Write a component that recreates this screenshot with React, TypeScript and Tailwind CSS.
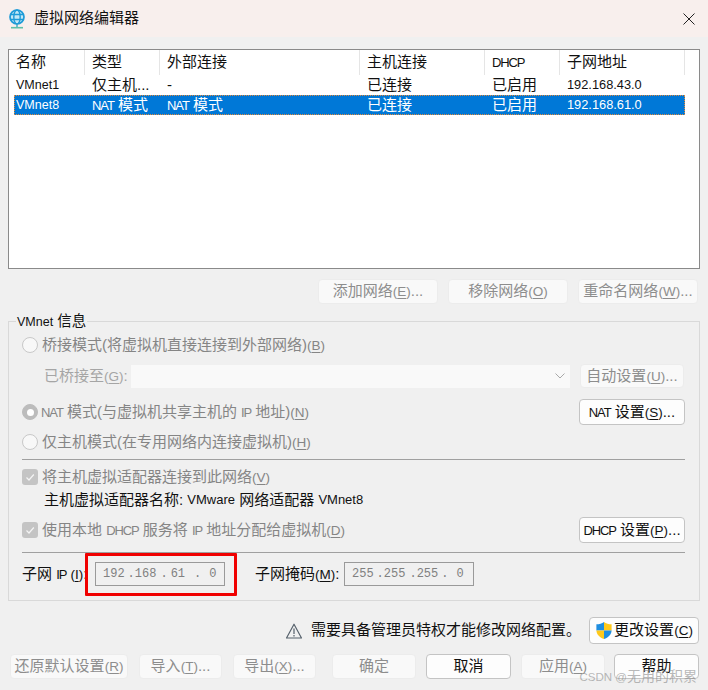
const FONT = "font-['Liberation_Sans','Noto_Sans_CJK_SC',sans-serif]";

function Btn({
  label,
  className,
  enabled,
  children,
}: {
  label?: string;
  className: string;
  enabled?: boolean;
  children?: React.ReactNode;
}) {
  return (
    <div
      className={`flex shrink-0 items-center justify-center whitespace-nowrap rounded-[4px] border text-[15px] ${
        enabled ? "border-[#c4c4c4] bg-[#fdfdfd] text-[#111]" : "border-[#ececec] bg-[#f9f9f9] text-[#8d8d8d]"
      } ${className}`}
    >
      {children ?? label}
    </div>
  );
}

function Radio({ on }: { on?: boolean }) {
  return (
    <div
      className={`flex h-[16px] w-[16px] shrink-0 items-center justify-center rounded-full border ${
        on ? "border-[#bcbcbc] bg-[#bcbcbc]" : "border-[#c8c8c8] bg-[#f8f8f8]"
      }`}
    >
      {on ? <div className="h-[7px] w-[7px] rounded-full bg-white" /> : null}
    </div>
  );
}

function Check() {
  return (
    <div className="flex h-[16px] w-[16px] shrink-0 items-center justify-center rounded-[3px] bg-[#c4c4c4]">
      <svg width="10" height="10" viewBox="0 0 10 10" fill="none" stroke="#f4f4f4" strokeWidth="1.2">
        <path d="M1.5 5.5 4 8l4.8-5.5" />
      </svg>
    </div>
  );
}

// 快捷键 (B) 这种
function Key({ k }: { k: string }) {
  return (
    <span className="text-[13.5px]">
      (<span className="underline underline-offset-2">{k}</span>)
    </span>
  );
}

// 大写西文字距收紧
function L({ children }: { children: string }) {
  return <span className="text-[13px] tracking-[-1.1px]">{children}</span>;
}

function W({ children }: { children: string }) {
  return <span className="text-[13px]">{children}</span>;
}

function GlobeIcon() {
  return (
    <svg width="18" height="20" viewBox="0 0 18 20" fill="none">
      <circle cx="9" cy="8" r="7" fill="#c4e8f6" stroke="#1f9bd8" strokeWidth="1.7" />
      <ellipse cx="9" cy="8" rx="3.2" ry="7" stroke="#1f9bd8" strokeWidth="1.4" />
      <path d="M2.4 5.5h13.2M2.4 10.5h13.2" stroke="#1f9bd8" strokeWidth="1.4" />
      <path d="M9 15v3" stroke="#35a8c8" strokeWidth="1.4" />
      <path d="M3 18.7h12" stroke="#5fc0a8" strokeWidth="1.6" />
    </svg>
  );
}

function Shield() {
  return (
    <svg width="18" height="19" viewBox="0 0 18 20">
      <path d="M9 1C7 2.6 4 3.4 1 3.4V10h8z" fill="#1f8ee0" />
      <path d="M9 1c2 1.6 5 2.4 8 2.4V10H9z" fill="#ffc91a" />
      <path d="M1 10c.3 4.4 3.6 7.6 8 9v-9z" fill="#ffc91a" />
      <path d="M17 10c-.3 4.4-3.6 7.6-8 9v-9z" fill="#1f8ee0" />
    </svg>
  );
}

function Warn() {
  return (
    <svg width="16" height="16" viewBox="0 0 16 16" fill="none" stroke="#55606b" strokeWidth="1.2">
      <path d="M8 1.2 15.5 15H.5z" strokeLinejoin="round" />
      <path d="M8 5.5v5.5M8 12v1.6" />
    </svg>
  );
}

function IpField({ parts }: { parts: [string, string][] }) {
  return (
    <div className="flex h-[24px] w-[130px] shrink-0 items-center border border-[#9a9a9a] font-['Liberation_Mono',monospace] text-[12px] text-[#808080]">
      {parts.map(([t, cls], i) => (
        <span key={i} className={cls}>
          {t}
        </span>
      ))}
    </div>
  );
}

const COLS: [string, string][] = [
  ["名称", "w-[76px]"],
  ["类型", "w-[75px]"],
  ["外部连接", "w-[200px]"],
  ["主机连接", "w-[125px]"],
  ["DHCP", "w-[75px]"],
  ["子网地址", "w-[125px]"],
];

const ROWS = [
  ["VMnet1", "仅主机...", "-", "已连接", "已启用", "192.168.43.0"],
  ["VMnet8", "NAT", "NAT", "已连接", "已启用", "192.168.61.0"],
];

export default function App() {
  return (
    <div className={`relative flex h-[690px] w-[708px] flex-col overflow-hidden bg-[#f0f0f0] text-[#111] ${FONT}`}>
      <div className="flex h-[37px] shrink-0 items-center bg-[#f8efed] pl-[8px] pr-[13px]">
        <GlobeIcon />
        <span className="ml-[8px] text-[15px]">虚拟网络编辑器</span>
        <svg className="ml-auto" width="12" height="12" viewBox="0 0 12 12" stroke="#222" strokeWidth="1">
          <path d="M.5.5l11 11M11.5.5l-11 11" />
        </svg>
      </div>

      <div className="flex flex-1 flex-col px-[8px]">
        <div className="mt-[12px] h-[220px] w-[692px] border border-[#8a8a8a] bg-white text-[15px]">
          <div className="flex h-[25px]">
            {COLS.map(([t, w]) => (
              <div key={t} className={`flex items-center border-r border-[#e5e5e5] pl-[7px] ${w}`}>
                {t === "DHCP" ? <L>{t}</L> : <span>{t}</span>}
              </div>
            ))}
          </div>
          {ROWS.map((r, i) => (
            <div
              key={r[0]}
              className={`ml-[5px] flex h-[20px] w-[671px] items-center ${
                i === 1 ? "bg-[#0078d7] text-white outline-1 -outline-offset-1 outline-dotted outline-[#e08a3c]" : ""
              }`}
            >
              <div className="w-[71px] pl-[2px] text-[12.5px]">{r[0]}</div>
              <div className="w-[75px] pl-[7px] whitespace-nowrap">
                {r[1] === "NAT" ? (
                  <>
                    <L>NAT</L> 模式
                  </>
                ) : (
                  r[1]
                )}
              </div>
              <div className="w-[200px] pl-[7px]">
                {r[2] === "NAT" ? (
                  <>
                    <L>NAT</L> 模式
                  </>
                ) : (
                  r[2]
                )}
              </div>
              <div className="w-[125px] pl-[7px]">{r[3]}</div>
              <div className="w-[75px] pl-[7px]">{r[4]}</div>
              <div className="pl-[7px] text-[12.8px]">{r[5]}</div>
            </div>
          ))}
        </div>

        <div className="mt-[10px] flex justify-end gap-[10px] pr-[2px]">
          <Btn className="h-[25px] w-[120px]">
            <span>添加网络<Key k="E" />...</span>
          </Btn>
          <Btn className="h-[25px] w-[120px]">
            <span>移除网络<Key k="O" /></span>
          </Btn>
          <Btn className="h-[25px] w-[120px]">
            <span>重命名网络<Key k="W" />...</span>
          </Btn>
        </div>

        <div className="relative mt-[17px] h-[280px] w-[692px] border border-[#d9d9d9] pl-[13px] pr-[14px]">
          <span className="absolute -top-[11px] left-[7px] bg-[#f0f0f0] px-[1px] text-[14.5px]">
            <span className="text-[12.5px]">VMnet</span> 信息
          </span>

          <div className="mt-[12px] flex h-[22px] items-center gap-[4px] text-[15px] text-[#858585]">
            <Radio />
            <span>桥接模式(将虚拟机直接连接到外部网络)<Key k="B" /></span>
          </div>

          <div className="mt-[8px] flex h-[24px] items-center">
            <span className="ml-[22px] w-[87px] text-[15px] whitespace-nowrap text-[#a5a5a5]">已桥接至<Key k="G" />:</span>
            <div className="flex h-[23px] w-[439px] items-center justify-end bg-[#f9f9f9] pr-[5px]">
              <svg width="10" height="6" viewBox="0 0 10 6" fill="none" stroke="#a8a8a8">
                <path d="M.5.5 5 5 9.5.5" />
              </svg>
            </div>
            <Btn className="ml-[10px] h-[24px] w-[104px]">
              <span>自动设置<Key k="U" />...</span>
            </Btn>
          </div>

          <div className="mt-[11px] flex h-[26px] items-center justify-between">
            <div className="flex items-center gap-[3px] text-[15px] text-[#858585]">
              <Radio on />
              <span><L>NAT</L> 模式(与虚拟机共享主机的 <L>IP</L> 地址)<Key k="N" /></span>
            </div>
            <Btn enabled className="h-[26px] w-[106px]">
              <span><L>NAT</L> 设置<Key k="S" />...</span>
            </Btn>
          </div>

          <div className="mt-[6px] flex h-[22px] items-center gap-[4px] text-[15px] text-[#858585]">
            <Radio />
            <span>仅主机模式(在专用网络内连接虚拟机)<Key k="H" /></span>
          </div>

          <div className="mt-[6px] h-px bg-[#a0a0a0]" />

          <div className="mt-[6px] flex h-[22px] items-center gap-[4px] text-[15px] text-[#858585]">
            <Check />
            <span>将主机虚拟适配器连接到此网络<Key k="V" /></span>
          </div>
          <div className="mt-px flex h-[22px] items-center pl-[22px] text-[15px] whitespace-pre">
            主机虚拟适配器名称: <W>VMware</W> 网络适配器 <W>VMnet8</W>
          </div>

          <div className="mt-[6px] flex h-[26px] items-center justify-between">
            <div className="flex items-center gap-[4px] text-[15px] text-[#858585]">
              <Check />
              <span>使用本地 <L>DHCP</L> 服务将 <L>IP</L> 地址分配给虚拟机<Key k="D" /></span>
            </div>
            <Btn enabled className="h-[26px] w-[106px]">
              <span><L>DHCP</L> 设置<Key k="P" />...</span>
            </Btn>
          </div>

          <div className="mt-[9px] h-px bg-[#a0a0a0]" />

          <div className="mt-[9px] flex h-[24px] items-center text-[15px]">
            <span className="w-[73px] whitespace-nowrap">子网 <L>IP</L> <Key k="I" />:</span>
            <IpField
              parts={[
                ["192", "ml-[7px]"],
                [".", "ml-[3px]"],
                ["168", "ml-[0px]"],
                [".", "ml-[4px]"],
                ["61", "ml-[3px]"],
                [".", "ml-[9px]"],
                ["0", "ml-[8px]"],
              ]}
            />
            <span className="ml-[30px] w-[89px] whitespace-nowrap">子网掩码<Key k="M" />:</span>
            <IpField
              parts={[
                ["255", "ml-[7px]"],
                [".", "ml-[3px]"],
                ["255", "ml-[0px]"],
                [".", "ml-[4px]"],
                ["255", "ml-[0px]"],
                [".", "ml-[3px]"],
                ["0", "ml-[8px]"],
              ]}
            />
          </div>
        </div>

        <div className="mt-[16px] flex h-[27px] items-center justify-end pr-[1px]">
          <Warn />
          <span className="ml-[9px] text-[15px]">需要具备管理员特权才能修改网络配置。</span>
          <Btn enabled className="ml-[8px] h-[27px] w-[110px] gap-[1px]">
            <Shield />
            <span>更改设置<Key k="C" /></span>
          </Btn>
        </div>

        <div className="mt-[10px] flex h-[25px]">
          <Btn className="ml-[2px] w-[118px]">
            <span>还原默认设置<Key k="R" /></span>
          </Btn>
          <Btn className="ml-[11px] w-[83px]">
            <span>导入<Key k="T" />...</span>
          </Btn>
          <Btn className="ml-[11px] w-[83px]">
            <span>导出<Key k="X" />...</span>
          </Btn>
          <Btn className="ml-[16px] w-[84px]" label="确定" />
          <Btn enabled className="ml-[10px] w-[85px]" label="取消" />
          <Btn className="ml-[10px] w-[84px]">
            <span>应用<Key k="A" /></span>
          </Btn>
          <Btn enabled className="ml-[9px] w-[85px]" label="帮助" />
        </div>
      </div>

      {/* 红框标注和水印 */}
      <div className="absolute left-[85px] top-[553px] h-[43px] w-[152px] rounded-[1px] border-[3px] border-[#f00000]" />
      <span className="absolute right-[11px] top-[666px] text-[14px] text-[#8a8a8a]/60">
        <span className="text-[11.5px]">CSDN @</span>无用的积累
      </span>
    </div>
  );
}
